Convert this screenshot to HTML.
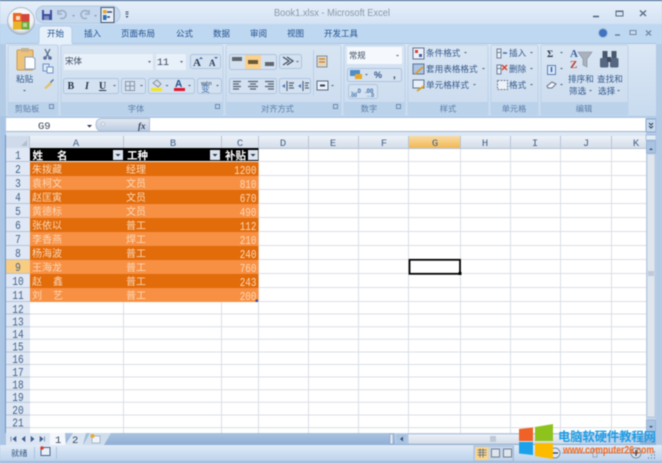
<!DOCTYPE html>
<html><head><meta charset="utf-8"><style>
html,body{margin:0;padding:0;width:662px;height:463px;overflow:hidden;background:#b4cbe6}
svg{display:block;filter:blur(.45px)}
text{font-family:"Liberation Sans","Noto Sans CJK SC",sans-serif;font-size:10px;fill:#2f5688}
.tab{font-size:8.5px;fill:#1f4f8c}
.cap{font-size:8.2px;fill:#5c7ea8;text-anchor:middle}
.rb{font-size:8.6px;fill:#34598a}
.hd{font-family:"Liberation Mono",monospace;font-size:10.5px;fill:#46628a;text-anchor:middle}
.rn{font-family:"Liberation Mono",monospace;font-size:12px;fill:#44628a;text-anchor:middle}
.c{font-family:"Noto Sans CJK SC",sans-serif;font-size:10px;fill:#fbd9b8}
.n{font-family:"Liberation Mono",monospace;font-size:11.5px;fill:#fbd9b8;text-anchor:end}
.h{font-family:"Noto Sans CJK SC",sans-serif;font-size:10.5px;font-weight:700;fill:#fff}
.box{fill:#d3e1f1;stroke:#aec4de;stroke-width:1}
.ic{fill:#4d5a6c}
</style></head><body>
<svg width="662" height="463" viewBox="0 0 662 463" xmlns="http://www.w3.org/2000/svg">
<defs>
<linearGradient id="tg" x1="0" y1="0" x2="0" y2="1"><stop offset="0" stop-color="#e6eff9"/><stop offset="1" stop-color="#d3e3f4"/></linearGradient>
<linearGradient id="rg" x1="0" y1="0" x2="0" y2="1"><stop offset="0" stop-color="#dbe7f5"/><stop offset="1" stop-color="#c8dbef"/></linearGradient>
<linearGradient id="gg" x1="0" y1="0" x2="0" y2="1"><stop offset="0" stop-color="#d8e5f3"/><stop offset="1" stop-color="#cbdcef"/></linearGradient>
<linearGradient id="hg" x1="0" y1="0" x2="0" y2="1"><stop offset="0" stop-color="#eef2f8"/><stop offset="1" stop-color="#d2dce9"/></linearGradient>
<linearGradient id="og" x1="0" y1="0" x2="0" y2="1"><stop offset="0" stop-color="#f9dca4"/><stop offset="1" stop-color="#f2b752"/></linearGradient>
<linearGradient id="sg" x1="0" y1="0" x2="0" y2="1"><stop offset="0" stop-color="#e0ebf7"/><stop offset="1" stop-color="#bcd2eb"/></linearGradient>
<linearGradient id="fg" x1="0" y1="0" x2="0" y2="1"><stop offset="0" stop-color="#e4e9f1"/><stop offset="1" stop-color="#bccde3"/></linearGradient>
<linearGradient id="bt" x1="0" y1="0" x2="0" y2="1"><stop offset="0" stop-color="#a9c2e0"/><stop offset="1" stop-color="#8fafd5"/></linearGradient>
<radialGradient id="ob" cx=".5" cy=".4" r=".6"><stop offset="0" stop-color="#fff"/><stop offset=".75" stop-color="#eef1f5"/><stop offset="1" stop-color="#a3afbf"/></radialGradient>
</defs>

<!-- frame -->
<rect width="662" height="463" fill="#b4cbe6"/>
<rect width="662" height="1" fill="#48688f"/>
<rect y="1" width="662" height="23" fill="url(#tg)"/>
<rect y="24" width="662" height="20" fill="#bfd8f1"/>

<!-- office button -->
<circle cx="21" cy="21" r="13.5" fill="url(#ob)"/>
<circle cx="21" cy="21" r="13.5" fill="none" stroke="#a0adbd" stroke-width=".7"/>
<rect x="13" y="13" width="8.500" height="8.500" fill="#e8691f"/>
<rect x="21.500" y="14" width="8" height="7.500" fill="#d4443a"/>
<rect x="13" y="21.500" width="8.500" height="8" fill="#e9b32a"/>
<rect x="21.500" y="21.500" width="8" height="8" fill="#6fa83a"/>
<rect x="16" y="16" width="4" height="4" fill="#fff" opacity=".75"/>
<rect x="23" y="23" width="4" height="4" fill="#cfe3a8" opacity=".8"/>

<!-- QAT -->
<rect x="36" y="6" width="84" height="17" rx="8" fill="#c5d8ee" stroke="#b3c8e0"/>
<rect x="42" y="10" width="10" height="10" fill="#3c4f9e"/>
<rect x="44" y="10" width="6" height="4" fill="#c8d4ea"/>
<rect x="44" y="16" width="5" height="4" fill="#7f8fc2"/>
<path d="M59 12a4 4 0 1 1 1 6M58 10v4h4" fill="none" stroke="#9aaec6" stroke-width="1.6"/>
<path d="M72 15h3l-1.500 2z" fill="#8a9fb9"/>
<path d="M88 12a4 4 0 1 0-1 6M89 10v4h-4" fill="none" stroke="#9aaec6" stroke-width="1.6"/>
<path d="M94 15h3l-1.500 2z" fill="#8a9fb9"/>
<rect x="101" y="7.500" width="13" height="15" fill="#e8eef6" stroke="#41546f"/>
<rect x="103" y="10" width="3.500" height="3.500" fill="#e3a92c"/>
<rect x="103" y="15" width="3.500" height="5" fill="#2e70b8"/>
<path d="M107 12h5M107 17h3" stroke="#304f7d" stroke-width="1.500"/>
<path d="M125.500 12h3M125.500 14h3" stroke="#3d4f66"/><path d="M125.500 16h3l-1.500 2z" fill="#3d4f66"/>

<text x="274" y="16" textLength="116" lengthAdjust="spacingAndGlyphs" style="font-size:10.5px;fill:#8a98aa">Book1.xlsx - Microsoft Excel</text>
<path d="M593 16.500h6" stroke="#4e6179" stroke-width="1.500"/>
<rect x="616" y="11" width="7" height="5" fill="#d9e6f4" stroke="#5c6f88"/><rect x="616" y="10.500" width="7" height="1.500" fill="#5c6f88"/>
<path d="M640 10.500l6 5.500M646 10.500l-6 5.500" stroke="#5d7089" stroke-width="1.500"/>

<!-- tabs -->
<path d="M39 44V30q0-4 4-4h25q4 0 4 4v14z" fill="#e6f0fa" stroke="#b5cce6"/>
<text class="tab" x="47" y="36.500">开始</text>
<text class="tab" x="84" y="36.500">插入</text>
<text class="tab" x="121" y="36.500">页面布局</text>
<text class="tab" x="176" y="36.500">公式</text>
<text class="tab" x="213" y="36.500">数据</text>
<text class="tab" x="250" y="36.500">审阅</text>
<text class="tab" x="287" y="36.500">视图</text>
<text class="tab" x="324" y="36.500">开发工具</text>
<circle cx="603" cy="33" r="4.500" fill="#3f73c0" stroke="#a9bfdb"/>
<path d="M615 35h5" stroke="#5e7690" stroke-width="1.300"/>
<rect x="630" y="30.500" width="6" height="4" fill="#cbdcf0" stroke="#7488a3"/>
<path d="M646 30.500l5 5M651 30.500l-5 5" stroke="#7488a3" stroke-width="1.300"/>

<!-- ribbon -->
<rect x="6" y="43" width="650" height="73" fill="url(#rg)"/>
<rect x="6" y="43" width="650" height="1" fill="#aac5e2"/>
<rect x="39" y="43" width="33" height="1.500" fill="#e6f0fa"/>
<g fill="url(#gg)" stroke="#bed2e8">
<rect x="8" y="45" width="50" height="70" rx="2"/>
<rect x="61" y="45" width="162" height="70" rx="2"/>
<rect x="226" y="45" width="115" height="70" rx="2"/>
<rect x="344" y="45" width="61" height="70" rx="2"/>
<rect x="408" y="45" width="80" height="70" rx="2"/>
<rect x="491" y="45" width="47" height="70" rx="2"/>
<rect x="541" y="45" width="87" height="70" rx="2"/>
</g>
<g fill="#bad2ea">
<rect x="8.500" y="102" width="49" height="13"/>
<rect x="61.500" y="102" width="161" height="13"/>
<rect x="226.500" y="102" width="114" height="13"/>
<rect x="344.500" y="102" width="60" height="13"/>
<rect x="408.500" y="102" width="79" height="13"/>
<rect x="491.500" y="102" width="46" height="13"/>
<rect x="541.500" y="102" width="86" height="13"/>
</g>
<text class="cap" x="27" y="111.500">剪贴板</text>
<text class="cap" x="136" y="111.500">字体</text>
<text class="cap" x="277.500" y="111.500">对齐方式</text>
<text class="cap" x="369" y="111.500">数字</text>
<text class="cap" x="448" y="111.500">样式</text>
<text class="cap" x="514" y="111.500">单元格</text>
<text class="cap" x="584" y="111.500">编辑</text>
<g fill="none" stroke="#6f8cb0"><rect x="49.500" y="104.500" width="4" height="4"/><rect x="215.500" y="104.500" width="4" height="4"/><rect x="396.500" y="104.500" width="4" height="4"/><rect x="333.500" y="104.500" width="4" height="4"/></g>

<!-- clipboard -->
<rect x="17" y="50" width="16" height="20" rx="1" fill="#eec379" stroke="#c79a55"/>
<rect x="21" y="48" width="8" height="4" fill="#c7b28e"/>
<path d="M25 57h8l2 2v10H25z" fill="#fafcff" stroke="#8fa2b9"/>
<text class="rb" x="16" y="82">粘贴</text>
<path d="M23 90h3l-1.500 1.500z" fill="#49607e"/>
<path d="M45 49l4 8M50 49l-4 8" stroke="#5b6f8f" stroke-width="1.300"/><circle cx="45" cy="58" r="1.800" fill="#5b6f9f"/><circle cx="50" cy="58" r="1.800" fill="#5b6f9f"/>
<rect x="43" y="64" width="6" height="7" fill="#dce6f3" stroke="#6f93c5"/><rect x="47" y="67" width="6" height="6" fill="#eff4fb" stroke="#6f93c5"/>
<path d="M44 88l6-6 2 2-6 5z" fill="#e2c26a"/><path d="M50 82l3-3 1 1-3 3z" fill="#5b7096"/>

<!-- font -->
<rect x="63.500" y="53.500" width="90" height="17" fill="#e8f0f9" stroke="#d5e2f0"/>
<rect x="155.500" y="53.500" width="31" height="17" fill="#e8f0f9" stroke="#d5e2f0"/>
<text x="65" y="64" style="fill:#34465e;font-size:8.500px">宋体</text>
<text x="157" y="65" style="fill:#34465e;font-size:10px;font-family:'Liberation Mono'">11</text>
<path d="M148 61h3l-1.500 2zM180 61h3l-1.500 2z" fill="#55677f"/>
<rect class="box" x="190.500" y="54.500" width="30" height="14" rx="2"/>
<text x="193" y="66" style="font-family:'Liberation Serif';font-weight:700;font-size:11px;fill:#2b3f5c">A</text>
<text x="209" y="66" style="font-family:'Liberation Serif';font-weight:700;font-size:9px;fill:#2b3f5c">A</text>
<path d="M201 57l2 2h-4zM216 59l2-2h-4z" fill="#3d6ba5"/>

<rect class="box" x="63.500" y="78.500" width="55" height="15" rx="2"/>
<rect class="box" x="121.500" y="78.500" width="24" height="15" rx="2"/>
<rect class="box" x="148.500" y="78.500" width="46" height="15" rx="2"/>
<rect class="box" x="197.500" y="78.500" width="24" height="15" rx="2"/>
<text x="67.500" y="89" style="font-family:'Liberation Serif';font-weight:700;font-size:10px;fill:#26344a">B</text>
<text x="85" y="89" style="font-family:'Liberation Serif';font-weight:700;font-style:italic;font-size:10px;fill:#26344a">I</text>
<text x="99" y="89" style="font-family:'Liberation Serif';font-weight:700;font-size:10px;fill:#26344a;text-decoration:underline">U</text>
<path d="M113 85h3l-1.500 1.500zM140 85h3l-1.500 1.500zM165.500 85h3l-1.500 1.500zM188 85h3l-1.500 1.500zM216 85h3l-1.500 1.500z" fill="#55677f"/>
<path d="M125.500 81.500h9v9h-9zM130 81.500v9M125.500 86h9" fill="none" stroke="#8b97a8"/>
<path d="M153 83l4-3 4 4-3 3z" fill="#d7dde6" stroke="#66758c" stroke-width=".7"/>
<rect x="151" y="88" width="11" height="3" fill="#f4e41c"/>
<text x="175" y="87" style="font-family:'Liberation Sans';font-weight:700;font-size:10px;fill:#244c88">A</text>
<rect x="174" y="88" width="11" height="3" fill="#e5142a"/>
<text x="201" y="85" style="font-size:5.500px;font-family:'Liberation Sans';font-weight:700;fill:#5b6e89">wén</text>
<text x="201" y="92" style="font-size:9px;fill:#4674ad">变</text>

<!-- alignment -->
<rect class="box" x="229.500" y="54.500" width="47" height="15" rx="2"/>
<rect x="245" y="55" width="16" height="14" fill="#f9d08c"/>
<rect x="232" y="57" width="10" height="4" fill="#62666d"/>
<rect x="248" y="60" width="10" height="4" fill="#6d5a35"/>
<rect x="265" y="62" width="9" height="4" fill="#62666d"/>
<rect class="box" x="279.500" y="54.500" width="22" height="14" rx="2"/>
<path d="M283 57l6 4-6 4M287 57l6 4-6 4" fill="none" stroke="#3e4c60" stroke-width="1.200"/>
<path d="M296 61h3l-1.500 1.500z" fill="#55677f"/>
<rect class="box" x="229.500" y="78.500" width="47" height="15" rx="2"/>
<rect class="box" x="279.500" y="78.500" width="31" height="15" rx="2"/>
<g stroke="#596475" stroke-width="1.200"><path d="M233 81.500h8M233 84h6M233 86.500h8M233 89h6M248 81.500h10M250 84h6M248 86.500h10M250 89h6M265 81.500h9M268 84h6M265 86.500h9M268 89h6"/>
<path d="M287 81v10M303 81v10M289 83h5M289 85.500h4M289 88h5M305 83h4M305 85.500h3M305 88h4"/></g>
<path d="M282 86l3-2v4zM298 86l3-2v4z" fill="#3c74bd"/>
<rect x="317" y="56" width="10" height="11" fill="#e6d6b8" stroke="#7e8da4"/>
<path d="M319 59h6M319 62h6" stroke="#c57d2f" stroke-width="1.300"/>
<rect x="317" y="81" width="11" height="9" fill="#edf2f8" stroke="#5a6c84"/>
<path d="M320 85.500h5" stroke="#32405a" stroke-width="2"/>
<path d="M331 85h3l-1.500 1.500z" fill="#55677f"/>
<path d="M313.500 50v46" stroke="#bcd0e6"/>

<!-- number -->
<rect x="347" y="47" width="55" height="17" fill="#f5f8fc"/>
<text x="349" y="58.500" style="fill:#3a4c63;font-size:8.300px">常规</text>
<path d="M396 55h3l-1.500 1.500z" fill="#55677f"/>
<rect class="box" x="347.500" y="68.500" width="54" height="13" rx="2"/>
<rect x="350" y="70" width="10" height="6" fill="#4e8dc9"/><rect x="355" y="74" width="7" height="5" fill="#e7a827"/>
<path d="M365 74h3l-1.500 1.500z" fill="#55677f"/>
<text x="374" y="78" style="font-family:'Liberation Sans';font-weight:700;font-size:9px;fill:#34598a">%</text>
<text x="393" y="78" style="font-family:'Liberation Sans';font-weight:700;font-size:10px;fill:#34465e">,</text>
<rect class="box" x="348.500" y="84.500" width="29" height="14" rx="2"/>
<text x="350" y="93" style="font-size:6px;font-weight:700;font-family:'Liberation Sans';fill:#3a6da8">←.0</text>
<text x="350" y="97" style="font-size:5px;font-weight:700;font-family:'Liberation Sans';fill:#3a6da8">.00</text>
<text x="365" y="93" style="font-size:6px;font-weight:700;font-family:'Liberation Sans';fill:#3a6da8">.00</text>
<text x="365" y="97" style="font-size:5px;font-weight:700;font-family:'Liberation Sans';fill:#3a6da8">→.0</text>

<!-- styles -->
<rect x="413" y="48" width="11" height="11" fill="#eef2f8" stroke="#5f7494"/><rect x="415" y="50" width="3" height="3" fill="#d9412f"/><rect x="419" y="54" width="3" height="3" fill="#405fa5"/>
<rect x="413" y="64" width="11" height="10" fill="#a8c4e6" stroke="#5f7494"/><path d="M415 74l8-7" stroke="#e29a28" stroke-width="1.800"/>
<rect x="413" y="80" width="11" height="8" fill="#e9eff7" stroke="#5f7494"/><path d="M417 91l7-5" stroke="#d9a329" stroke-width="1.800"/>
<text class="rb" x="426" y="56">条件格式</text>
<text class="rb" x="426" y="72">套用表格格式</text>
<text class="rb" x="426" y="88">单元格样式</text>
<path d="M464 52h3l-1.500 1.500zM482 68h3l-1.500 1.500zM473 84h3l-1.500 1.500z" fill="#55677f"/>

<!-- cells -->
<path d="M497 49h4v9h-4zM497 52.500h4" fill="#e9f0f8" stroke="#6f7f96"/><path d="M503 53h4" stroke="#3f6db0" stroke-width="1.500"/>
<path d="M497 65h4v9h-4zM497 68.500h4" fill="#e9f0f8" stroke="#6f7f96"/><path d="M502 65l5 5M507 65l-5 5" stroke="#d8402c" stroke-width="1.400"/>
<rect x="497.500" y="80.500" width="10" height="9" fill="#edf2f8" stroke="#6f7f96" stroke-dasharray="2 1"/>
<text class="rb" x="509" y="56">插入</text>
<text class="rb" x="509" y="72">删除</text>
<text class="rb" x="509" y="88">格式</text>
<path d="M530 52h3l-1.500 1.500zM530 68h3l-1.500 1.500zM530 84h3l-1.500 1.500z" fill="#55677f"/>

<!-- editing -->
<text x="547" y="57" style="font-family:'Liberation Serif';font-weight:700;font-size:9.500px;fill:#26344a">Σ</text>
<path d="M560 52h3l-1.500 1.500zM560 68h3l-1.500 1.500zM560 84h3l-1.500 1.500z" fill="#55677f"/>
<rect x="547.500" y="65.500" width="8" height="9" fill="#dce8f6" stroke="#5a80b8"/><path d="M551.500 67v5" stroke="#2c5fb0" stroke-width="1.500"/>
<path d="M547 86l5-4 4 2-4 4h-4z" fill="#f3f5f8" stroke="#66758c"/>
<text x="570" y="57" style="font-family:'Liberation Serif';font-weight:700;font-size:11px;fill:#3d5fa0">A</text>
<text x="570" y="68" style="font-family:'Liberation Serif';font-weight:700;font-size:11px;fill:#b8412f">Z</text>
<path d="M578 52h14l-5 7v8l-4-2v-6z" fill="#a9b1bc" stroke="#828c9a" stroke-width=".6"/>
<path d="M602.500 51h5v8h-5zM611.500 51h5v8h-5z" fill="#49586e"/>
<rect x="600" y="58" width="8.500" height="9.500" rx="1.500" fill="#566781"/><rect x="610" y="58" width="8.500" height="9.500" rx="1.500" fill="#566781"/><rect x="607" y="57" width="4" height="5" fill="#3d4a5d"/>
<text class="rb" x="568" y="82">排序和</text>
<text class="rb" x="569" y="94">筛选</text><path d="M589 90h3l-1.500 1.500z" fill="#55677f"/>
<text class="rb" x="597" y="82">查找和</text>
<text class="rb" x="598" y="94">选择</text><path d="M617 90h3l-1.500 1.500z" fill="#55677f"/>

<!-- formula bar -->
<rect x="6" y="116" width="650" height="3" fill="#b1cbe6"/>
<rect x="6" y="118" width="640" height="13" fill="#fff"/>
<rect x="646" y="119" width="10" height="13" fill="#c5d8ee" stroke="#8ba7ca"/>
<path d="M649 123l2 2 2-2M649 126l2 2 2-2" fill="none" stroke="#32405a" stroke-width="1.100"/>
<text x="38" y="129" style="font-family:'Liberation Mono',monospace;font-size:10.500px;fill:#3a4656">G9</text>
<path d="M87 125h5l-2.500 2.500z" fill="#26344a"/>
<path d="M149.500 118.500H102q-6 0-6 6.300t6 6.200h47.500z" fill="url(#fg)" stroke="#b0c1d7"/>
<circle cx="103" cy="124" r="2" fill="#dfe6ef" stroke="#a9b6c7" stroke-width=".6"/>
<text x="138" y="129" style="font-family:'Liberation Serif';font-style:italic;font-weight:700;font-size:9px;fill:#33435a">fx</text>
<rect x="6" y="131" width="640" height="1" fill="#9fb8d6"/>
<rect x="6" y="132" width="640" height="4" fill="#dce7f3"/>

<!-- left side -->
<rect x="0" y="116" width="6" height="330" fill="#a9c4e4"/>
<rect x="5" y="135" width="1" height="298" fill="#6d93c8"/>

<!-- sheet -->
<rect x="29" y="148" width="617" height="285" fill="#fff"/>
<rect x="6" y="136" width="640" height="12.500" fill="url(#hg)"/>
<rect x="409" y="136" width="52" height="12.500" fill="url(#og)"/>
<rect x="6" y="136" width="24" height="12.500" fill="#cfdbea"/>
<path d="M27 140v6h-6z" fill="#b0bdcd"/>
<rect x="6" y="148" width="24" height="285" fill="#dfe8f4"/>
<rect x="6" y="259.500" width="24" height="14" fill="#f8cc81"/>
<g stroke="#dadfe5">
<path d="M29.500 161.500H646M29.500 175.500H646M29.500 189.500H646M29.500 203.500H646M29.500 217.500H646M29.500 231.500H646M29.500 245.500H646M29.500 259.500H646M29.500 273.500H646M29.500 287.500H646M29.500 301.500H646"/>
<path d="M29.500 314H646M29.500 326.700H646M29.500 339.300H646M29.500 352H646M29.500 364.500H646M29.500 377H646M29.500 389.700H646M29.500 402.300H646M29.500 415H646M29.500 427.600H646"/>
<path d="M123.500 148V433M221.500 148V433M258.500 148V433M308.500 148V433M358.500 148V433M408.500 148V433M460.500 148V433M510.500 148V433M560.500 148V433M611.500 148V433"/>
</g>
<g stroke="#b7c5d6">
<path d="M6 161.500h24M6 175.500h24M6 189.500h24M6 203.500h24M6 217.500h24M6 231.500h24M6 245.500h24M6 259.500h24M6 273.500h24M6 287.500h24M6 301.500h24M6 314h24M6 326.700h24M6 339.300h24M6 352h24M6 364.500h24M6 377h24M6 389.700h24M6 402.300h24M6 415h24M6 427.600h24"/>
<path d="M29.500 136v12.500M123.500 136v12.500M221.500 136v12.500M258.500 136v12.500M308.500 136v12.500M358.500 136v12.500M408.500 136v12.500M460.500 136v12.500M510.500 136v12.500M560.500 136v12.500M611.500 136v12.500"/>
<path d="M29.500 148.500H646"/>
</g>

<!-- column letters -->
<text class="hd" x="76" y="146">A</text><text class="hd" x="173" y="146">B</text><text class="hd" x="240" y="146">C</text><text class="hd" x="283" y="146">D</text><text class="hd" x="333" y="146">E</text><text class="hd" x="384" y="146">F</text><text class="hd" x="435" y="146">G</text><text class="hd" x="485" y="146">H</text><text class="hd" x="535" y="146">I</text><text class="hd" x="586" y="146">J</text><text class="hd" x="636" y="146">K</text>
<!-- row numbers -->
<text class="rn" x="18" y="159" textLength="5.700" lengthAdjust="spacingAndGlyphs">1</text><text class="rn" x="18" y="173" textLength="5.700" lengthAdjust="spacingAndGlyphs">2</text><text class="rn" x="18" y="187" textLength="5.700" lengthAdjust="spacingAndGlyphs">3</text><text class="rn" x="18" y="201" textLength="5.700" lengthAdjust="spacingAndGlyphs">4</text><text class="rn" x="18" y="215" textLength="5.700" lengthAdjust="spacingAndGlyphs">5</text><text class="rn" x="18" y="229" textLength="5.700" lengthAdjust="spacingAndGlyphs">6</text><text class="rn" x="18" y="243" textLength="5.700" lengthAdjust="spacingAndGlyphs">7</text><text class="rn" x="18" y="257" textLength="5.700" lengthAdjust="spacingAndGlyphs">8</text><text class="rn" x="18" y="271" textLength="5.700" lengthAdjust="spacingAndGlyphs">9</text><text class="rn" x="18" y="285" textLength="11.400" lengthAdjust="spacingAndGlyphs">10</text><text class="rn" x="18" y="299" textLength="11.400" lengthAdjust="spacingAndGlyphs">11</text><text class="rn" x="18" y="313" textLength="11.400" lengthAdjust="spacingAndGlyphs">12</text><text class="rn" x="18" y="325.500" textLength="11.400" lengthAdjust="spacingAndGlyphs">13</text><text class="rn" x="18" y="338" textLength="11.400" lengthAdjust="spacingAndGlyphs">14</text><text class="rn" x="18" y="350.500" textLength="11.400" lengthAdjust="spacingAndGlyphs">15</text><text class="rn" x="18" y="363" textLength="11.400" lengthAdjust="spacingAndGlyphs">16</text><text class="rn" x="18" y="376" textLength="11.400" lengthAdjust="spacingAndGlyphs">17</text><text class="rn" x="18" y="388.500" textLength="11.400" lengthAdjust="spacingAndGlyphs">18</text><text class="rn" x="18" y="401" textLength="11.400" lengthAdjust="spacingAndGlyphs">19</text><text class="rn" x="18" y="414" textLength="11.400" lengthAdjust="spacingAndGlyphs">20</text><text class="rn" x="18" y="426.500" textLength="11.400" lengthAdjust="spacingAndGlyphs">21</text>

<!-- table -->
<rect x="30" y="148" width="228.500" height="13" fill="#000"/>
<g fill="#e26b0a"><rect x="30" y="162" width="228.500" height="14"/><rect x="30" y="190" width="228.500" height="14"/><rect x="30" y="218" width="228.500" height="14"/><rect x="30" y="246" width="228.500" height="14"/><rect x="30" y="274" width="228.500" height="14"/></g>
<g fill="#f79043"><rect x="30" y="176" width="228.500" height="14"/><rect x="30" y="204" width="228.500" height="14"/><rect x="30" y="232" width="228.500" height="14"/><rect x="30" y="260" width="228.500" height="14"/><rect x="30" y="288" width="228.500" height="14"/></g>
<path d="M30 161.500h228.500" stroke="#fff" stroke-width=".8"/>
<text class="h" x="32.500" y="159">姓</text><text class="h" x="57" y="159">名</text><text class="h" x="127" y="159">工种</text><text class="h" x="225" y="159">补贴</text>
<g fill="#dbe3ef"><rect x="113" y="150" width="10" height="10"/><rect x="210" y="150" width="10" height="10"/><rect x="248" y="150" width="10" height="10"/></g>
<path d="M115.500 154h5l-2.500 2.500zM212.500 154h5l-2.500 2.500zM250.500 154h5l-2.500 2.500z" fill="#26344a"/>

<text class="c" x="32" y="173">朱拨藏</text><text class="c" x="126" y="173">经理</text><text class="n" x="256.500" y="174" textLength="22.400" lengthAdjust="spacingAndGlyphs">1200</text>
<text class="c" x="32" y="187">袁柯文</text><text class="c" x="126" y="187">文员</text><text class="n" x="256.500" y="188" textLength="16.800" lengthAdjust="spacingAndGlyphs">810</text>
<text class="c" x="32" y="201">赵匡寅</text><text class="c" x="126" y="201">文员</text><text class="n" x="256.500" y="202" textLength="16.800" lengthAdjust="spacingAndGlyphs">670</text>
<text class="c" x="32" y="215">黄德标</text><text class="c" x="126" y="215">文员</text><text class="n" x="256.500" y="216" textLength="16.800" lengthAdjust="spacingAndGlyphs">490</text>
<text class="c" x="32" y="229">张依以</text><text class="c" x="126" y="229">普工</text><text class="n" x="256.500" y="230" textLength="16.800" lengthAdjust="spacingAndGlyphs">112</text>
<text class="c" x="32" y="243">李香燕</text><text class="c" x="126" y="243">焊工</text><text class="n" x="256.500" y="244" textLength="16.800" lengthAdjust="spacingAndGlyphs">210</text>
<text class="c" x="32" y="257">杨海波</text><text class="c" x="126" y="257">普工</text><text class="n" x="256.500" y="258" textLength="16.800" lengthAdjust="spacingAndGlyphs">240</text>
<text class="c" x="32" y="271">王海龙</text><text class="c" x="126" y="271">普工</text><text class="n" x="256.500" y="272" textLength="16.800" lengthAdjust="spacingAndGlyphs">760</text>
<text class="c" x="32" y="285">赵</text><text class="c" x="53" y="285">鑫</text><text class="c" x="126" y="285">普工</text><text class="n" x="256.500" y="286" textLength="16.800" lengthAdjust="spacingAndGlyphs">243</text>
<text class="c" x="32" y="299">刘</text><text class="c" x="53" y="299">艺</text><text class="c" x="126" y="299">普工</text><text class="n" x="256.500" y="300" textLength="16.800" lengthAdjust="spacingAndGlyphs">200</text>
<rect x="255.500" y="299.500" width="2.500" height="2.500" fill="#3355aa"/>

<!-- selection -->
<rect x="409.500" y="259.800" width="50.500" height="14" fill="none" stroke="#000" stroke-width="1.800"/>
<rect x="458.500" y="272" width="3" height="3" fill="#000"/>

<!-- v scrollbar -->
<rect x="646" y="135" width="10" height="298" fill="#c2d5ec"/>
<rect x="646" y="135" width="10" height="5" fill="#e4edf7" stroke="#8ba7ca" stroke-width=".6"/>
<rect x="646.500" y="141" width="9" height="12" fill="#a9c3e3" stroke="#8ba7ca" stroke-width=".6"/>
<path d="M649 150h4l-2-2z" fill="#3d526f"/>
<rect x="647" y="154" width="8" height="263" fill="#dfe6ef" stroke="#a7b9cf" stroke-width=".6"/>
<rect x="648" y="271" width="6" height="5" fill="#c0cada"/>
<rect x="646.500" y="420" width="9" height="12" fill="#a9c3e3" stroke="#8ba7ca" stroke-width=".6"/>
<path d="M649 426h4l-2 2z" fill="#3d526f"/>
<rect x="656" y="116" width="6" height="330" fill="#b3cae6"/>

<!-- bottom tabs -->
<rect x="6" y="433" width="650" height="12" fill="url(#bt)"/>
<rect x="6" y="433" width="44" height="12" fill="#dce6f3"/>
<path d="M11 436.500v5M16 436.500l-3 2.500 3 2.500zM25 436.500l-3 2.500 3 2.500zM31 436.500l3 2.500-3 2.500zM40 436.500l3 2.500-3 2.500zM44.500 436.500v5" fill="#3d5c8f" stroke="#3d5c8f" stroke-width=".6"/>
<path d="M50 433h15l1 12H50z" fill="#f4f7fb"/>
<text x="55" y="443" style="font-family:'Liberation Mono',monospace;font-size:10.500px;fill:#33465f">1</text>
<path d="M65 445l8-12h13l-3 12z" fill="#dbe5f2"/>
<text x="72" y="443" style="font-family:'Liberation Mono',monospace;font-size:10.500px;fill:#33465f">2</text>
<path d="M83 445l7-12h21l-7 12z" fill="#cfdcec"/>
<rect x="92" y="436" width="8" height="7" fill="#eff4fa" stroke="#93a5bb" stroke-width=".7"/><circle cx="92.500" cy="436" r="2" fill="#e7a92d"/>
<rect x="390" y="434" width="3" height="10" fill="#dfe7f2" stroke="#7e97b8" stroke-width=".5"/>
<rect x="395" y="433" width="245" height="11" fill="#bed2ea"/>
<rect x="396" y="434" width="11" height="10" fill="#a9c3e3"/>
<path d="M403 436.500v5l-3-2.500z" fill="#3d526f"/>
<rect x="408" y="434" width="172" height="10" fill="url(#hg)" stroke="#9fb2c9" stroke-width=".6"/>
<rect x="490" y="436" width="6" height="6" fill="#bfc9d7"/>

<!-- status bar -->
<rect x="0" y="445" width="662" height="16" fill="url(#sg)"/>
<rect x="0" y="461" width="662" height="2" fill="#a3bfdf"/>
<text x="11" y="456" style="font-size:8.200px;fill:#33537f">就绪</text>
<path d="M34.500 447v12M56.500 447v12" stroke="#acc2dc"/>
<rect x="41" y="447.500" width="9" height="8" fill="#eaf0f8" stroke="#42668f"/><circle cx="42" cy="448" r="1.800" fill="#d8392b"/>
<rect x="474" y="446" width="39" height="15" fill="#c4d5ea" stroke="#a7bdd8"/>
<rect x="475.500" y="447" width="13" height="13" fill="#f9d48c"/>
<path d="M477.500 450h9M477.500 452.500h9M477.500 455h9M480 448.500v9M483 448.500v9" stroke="#5f6b7c" stroke-width=".8"/>
<rect x="491.500" y="449" width="8" height="8" fill="#dfe5ed" stroke="#6f7e92"/>
<rect x="503.500" y="449" width="8" height="8" fill="#dfe5ed" stroke="#6f7e92"/>
<path d="M513.500 446v15" stroke="#a7bdd8"/>
<circle cx="555" cy="453" r="5" fill="#dde7f3" stroke="#7a8da6"/><path d="M552 453h6" stroke="#2f3e54" stroke-width="1.300"/>
<path d="M562 453h70" stroke="#8ea5c2"/><rect x="593" y="449" width="4" height="8" fill="#cfdbe9" stroke="#7a8da6" stroke-width=".6"/>
<circle cx="636" cy="453" r="5" fill="#dde7f3" stroke="#7a8da6"/><path d="M633 453h6M636 450v6" stroke="#2f3e54" stroke-width="1.300"/>
<path d="M654 458h1M651 458h1M648 458h1M654 455h1M651 455h1M654 452h1" stroke="#6f86a5" stroke-width="1.500"/>

<!-- watermark -->
<path d="M519 429l14-1.500V441h-14z" fill="#ef6127"/>
<path d="M535 427l18-3v17h-18z" fill="#8ec31e"/>
<path d="M519 442h14v13l-14-1.500z" fill="#1ba2ea"/>
<path d="M535 443h18v16l-18-3z" fill="#fdbb00"/>
<text x="558" y="441" textLength="98" lengthAdjust="spacingAndGlyphs" style="font-family:'Noto Sans CJK SC',sans-serif;font-size:12.500px;font-weight:700;fill:#1f9ce4">电脑软硬件教程网</text>
<text x="563" y="453.500" textLength="91" lengthAdjust="spacingAndGlyphs" style="font-family:'Liberation Sans',sans-serif;font-size:11px;font-weight:700;fill:#f26a21">www.computer26.com</text>
</svg>
</body></html>
